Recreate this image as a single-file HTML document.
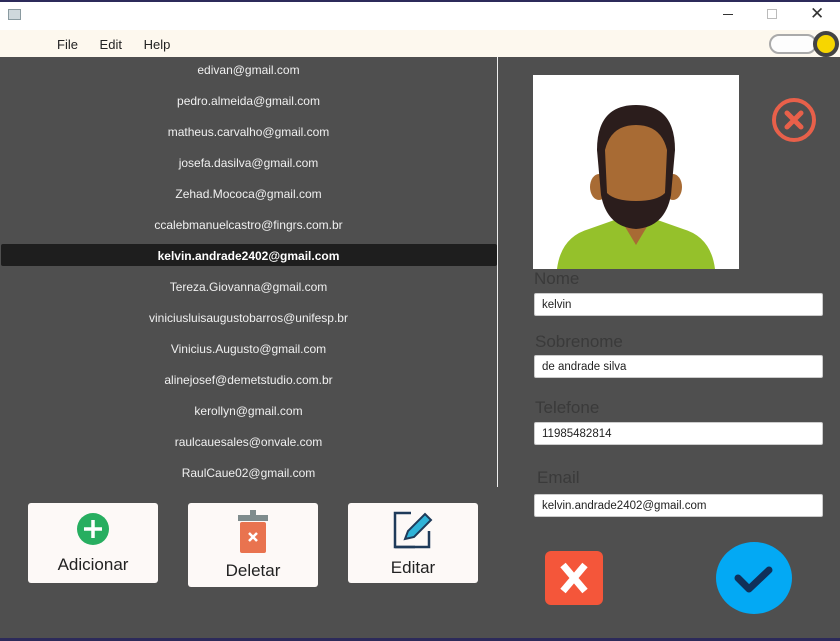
<!DOCTYPE html>
<html><head><style>
*{margin:0;padding:0;box-sizing:border-box}
body{width:840px;height:641px;overflow:hidden;background:#4f4f4f;font-family:"Liberation Sans",sans-serif;position:relative}
.a{position:absolute}
.li{position:absolute;left:0;width:497px;text-align:center;color:#f0f0f0;font-size:12px}
.lbl{position:absolute;color:#3a3a3a;font-size:17px}
.in{position:absolute;left:534px;width:289px;height:23px;background:#fff;border:1px solid #ccc;border-radius:2px;font-size:11.5px;color:#222;padding:5px 0 0 7px}
.btn{position:absolute;background:#fdf9f7;border-radius:3px;text-align:center;font-size:17px;color:#222}
</style></head><body>
<div class="a" style="left:0;top:0;width:840px;height:2px;background:#2c2a5a"></div>
<div class="a" style="left:0;top:2px;width:840px;height:28px;background:#fff"></div>
<div class="a" style="left:8px;top:9px;width:13px;height:11px;border:1px solid #8a9aa0;background:#cfd8dc"></div>
<div class="a" style="left:723px;top:14px;width:10px;height:1px;background:#333"></div>
<div class="a" style="left:767px;top:9px;width:10px;height:10px;border:1px solid #bbb"></div>
<div class="a" style="left:810px;top:4px;font-size:17px;color:#333">✕</div>
<div class="a" style="left:0;top:30px;width:840px;height:27px;background:#fdf8ee"></div>
<div class="a" style="left:57px;top:37px;font-size:13px;color:#222;word-spacing:18px">File Edit Help</div>
<div class="a" style="left:769px;top:34px;width:48px;height:20px;border-radius:10px;background:#fdfdfd;border:2px solid #aaa"></div>
<div class="a" style="left:813px;top:31px;width:26px;height:26px;border-radius:50%;background:#f7d600;border:4px solid #444"></div>
<div class="a" style="left:497px;top:57px;width:1px;height:430px;background:#eee"></div>
<div class="li" style="top:63px">edivan@gmail.com</div>
<div class="li" style="top:94px">pedro.almeida@gmail.com</div>
<div class="li" style="top:125px">matheus.carvalho@gmail.com</div>
<div class="li" style="top:156px">josefa.dasilva@gmail.com</div>
<div class="li" style="top:187px">Zehad.Mococa@gmail.com</div>
<div class="li" style="top:218px">ccalebmanuelcastro@fingrs.com.br</div>
<div class="a" style="left:1px;top:244px;width:496px;height:22px;background:#1e1e1e;border-radius:2px"></div>
<div class="li" style="top:249px;font-weight:bold;color:#fff">kelvin.andrade2402@gmail.com</div>
<div class="li" style="top:280px">Tereza.Giovanna@gmail.com</div>
<div class="li" style="top:311px">viniciusluisaugustobarros@unifesp.br</div>
<div class="li" style="top:342px">Vinicius.Augusto@gmail.com</div>
<div class="li" style="top:373px">alinejosef@demetstudio.com.br</div>
<div class="li" style="top:404px">kerollyn@gmail.com</div>
<div class="li" style="top:435px">raulcauesales@onvale.com</div>
<div class="li" style="top:466px">RaulCaue02@gmail.com</div>
<svg class="a" style="left:533px;top:75px" width="206" height="194" viewBox="0 0 206 194">
<rect width="206" height="194" fill="#fff"/>
<path d="M24 194 Q28 162 56 154 L90 142 L116 142 L150 154 Q178 162 182 194Z" fill="#95c12b"/>
<path d="M88 120 L88 145 L103 170 L118 145 L118 120Z" fill="#a86b34"/>
<ellipse cx="66" cy="112" rx="9" ry="13" fill="#a86b34"/><ellipse cx="140" cy="112" rx="9" ry="13" fill="#a86b34"/>
<path d="M64 75 Q64 30 103 30 Q142 30 142 75 L138 120 Q132 152 103 154 Q74 152 68 120Z" fill="#2b1d1c"/>
<path d="M72 75 Q78 50 103 50 Q128 50 134 75 L132 118 Q124 126 103 126 Q82 126 74 118Z" fill="#a86b34"/>
</svg>
<svg class="a" style="left:769px;top:97px" width="50" height="46"><circle cx="25" cy="23" r="20" fill="none" stroke="#e8604a" stroke-width="4"/><path d="M18 16L32 30M32 16L18 30" stroke="#e8604a" stroke-width="5" stroke-linecap="round"/></svg>
<div class="lbl" style="left:534px;top:269px">Nome</div>
<div class="in" style="top:293px">kelvin</div>
<div class="lbl" style="left:535px;top:332px">Sobrenome</div>
<div class="in" style="top:355px">de andrade silva</div>
<div class="lbl" style="left:535px;top:398px">Telefone</div>
<div class="in" style="top:422px">11985482814</div>
<div class="lbl" style="left:537px;top:468px">Email</div>
<div class="in" style="top:494px">kelvin.andrade2402@gmail.com</div>
<div class="btn" style="left:28px;top:503px;width:130px;height:80px"><svg width="34" height="34" style="margin-top:9px"><circle cx="17" cy="17" r="16" fill="#27ae60"/><path d="M17 8V26M8 17H26" stroke="#fff" stroke-width="3.5"/></svg><div style="margin-top:4px">Adicionar</div></div>
<div class="btn" style="left:188px;top:503px;width:130px;height:84px"><svg width="34" height="46" style="margin-top:5px"><rect x="14" y="2" width="6" height="5" fill="#7f8c8d"/><rect x="2" y="7" width="30" height="6" fill="#7f8c8d"/><rect x="4" y="14" width="26" height="31" rx="2" fill="#e9734f"/><path d="M13 25L21 33M21 25L13 33" stroke="#fff" stroke-width="2.5"/></svg><div style="margin-top:2px">Deletar</div></div>
<div class="btn" style="left:348px;top:503px;width:130px;height:80px"><svg width="44" height="40" style="margin-top:6px"><path d="M20 4H4V38H24" fill="none" stroke="#1f3b5a" stroke-width="2.5"/><path d="M4 38H38V22" fill="none" stroke="#1f3b5a" stroke-width="2.5"/><path d="M14 30L17 22L34 5L40 11L23 28Z" fill="#30b3d8" stroke="#1f3b5a" stroke-width="2"/></svg><div style="margin-top:4px">Editar</div></div>
<svg class="a" style="left:545px;top:551px" width="58" height="54"><rect width="58" height="54" rx="6" fill="#f4563a"/><path d="M18 14L40 40M40 14L18 40" stroke="#fff" stroke-width="7"/></svg>
<svg class="a" style="left:716px;top:542px" width="78" height="72"><ellipse cx="38" cy="36" rx="38" ry="36" fill="#03a9f4"/><path d="M22 36L33 47L53 28" fill="none" stroke="#10305a" stroke-width="7" stroke-linecap="round" stroke-linejoin="round"/></svg>
<div class="a" style="left:0;top:638px;width:840px;height:3px;background:#2c2a5a"></div>
</body></html>
